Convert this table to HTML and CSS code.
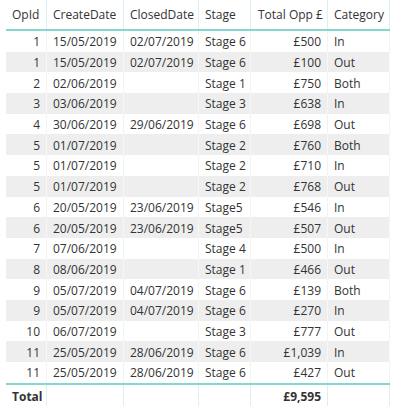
FILE: index.html
```html
<!DOCTYPE html>
<html>
<head>
<meta charset="utf-8">
<link rel="stylesheet" href="styles.css">
</head>
<body>
<div class="tbl">
  <div class="row head">
    <div class="c">OpId</div><div class="c">CreateDate</div><div class="c">ClosedDate</div><div class="c">Stage</div><div class="c">Total Opp £</div><div class="c">Category</div>
  </div>
  <div class="body">
    <div class="row"><div class="c r">1</div><div class="c">15/05/2019</div><div class="c">02/07/2019</div><div class="c">Stage 6</div><div class="c r">£500</div><div class="c">In</div></div>
    <div class="row"><div class="c r">1</div><div class="c">15/05/2019</div><div class="c">02/07/2019</div><div class="c">Stage 6</div><div class="c r">£100</div><div class="c">Out</div></div>
    <div class="row"><div class="c r">2</div><div class="c">02/06/2019</div><div class="c"></div><div class="c">Stage 1</div><div class="c r">£750</div><div class="c">Both</div></div>
    <div class="row"><div class="c r">3</div><div class="c">03/06/2019</div><div class="c"></div><div class="c">Stage 3</div><div class="c r">£638</div><div class="c">In</div></div>
    <div class="row"><div class="c r">4</div><div class="c">30/06/2019</div><div class="c">29/06/2019</div><div class="c">Stage 6</div><div class="c r">£698</div><div class="c">Out</div></div>
    <div class="row"><div class="c r">5</div><div class="c">01/07/2019</div><div class="c"></div><div class="c">Stage 2</div><div class="c r">£760</div><div class="c">Both</div></div>
    <div class="row"><div class="c r">5</div><div class="c">01/07/2019</div><div class="c"></div><div class="c">Stage 2</div><div class="c r">£710</div><div class="c">In</div></div>
    <div class="row"><div class="c r">5</div><div class="c">01/07/2019</div><div class="c"></div><div class="c">Stage 2</div><div class="c r">£768</div><div class="c">Out</div></div>
    <div class="row"><div class="c r">6</div><div class="c">20/05/2019</div><div class="c">23/06/2019</div><div class="c">Stage5</div><div class="c r">£546</div><div class="c">In</div></div>
    <div class="row"><div class="c r">6</div><div class="c">20/05/2019</div><div class="c">23/06/2019</div><div class="c">Stage5</div><div class="c r">£507</div><div class="c">Out</div></div>
    <div class="row"><div class="c r">7</div><div class="c">07/06/2019</div><div class="c"></div><div class="c">Stage 4</div><div class="c r">£500</div><div class="c">In</div></div>
    <div class="row"><div class="c r">8</div><div class="c">08/06/2019</div><div class="c"></div><div class="c">Stage 1</div><div class="c r">£466</div><div class="c">Out</div></div>
    <div class="row"><div class="c r">9</div><div class="c">05/07/2019</div><div class="c">04/07/2019</div><div class="c">Stage 6</div><div class="c r">£139</div><div class="c">Both</div></div>
    <div class="row"><div class="c r">9</div><div class="c">05/07/2019</div><div class="c">04/07/2019</div><div class="c">Stage 6</div><div class="c r">£270</div><div class="c">In</div></div>
    <div class="row"><div class="c r">10</div><div class="c">06/07/2019</div><div class="c"></div><div class="c">Stage 3</div><div class="c r">£777</div><div class="c">Out</div></div>
    <div class="row"><div class="c r">11</div><div class="c">25/05/2019</div><div class="c">28/06/2019</div><div class="c">Stage 6</div><div class="c r">£1,039</div><div class="c">In</div></div>
    <div class="row"><div class="c r">11</div><div class="c">25/05/2019</div><div class="c">28/06/2019</div><div class="c">Stage 6</div><div class="c r">£427</div><div class="c">Out</div></div>
  </div>
  <div class="row total">
    <div class="c">Total</div><div class="c"></div><div class="c"></div><div class="c"></div><div class="c r">£9,595</div><div class="c"></div>
  </div>
</div>
</body>
</html>
```
FILE: styles.css
```css
html, body {
  margin: 0;
  padding: 0;
  background: #ffffff;
}
body {
  font-family: "Open Sans", "Noto Sans", sans-serif;
  font-size: 12px;
  color: #333333;
}
.tbl {
  margin-left: 6px;
  width: 384px;
}
.row {
  display: grid;
  grid-template-columns: 41px 77px 75px 52px 77px 62px;
  height: 20.7px;
}
.c {
  display: flex;
  align-items: center;
  padding: 1px 6px 0 6px;
  border-right: 1px solid #f3f3f3;
  white-space: nowrap;
  overflow: hidden;
  box-sizing: border-box;
}
.c.r {
  justify-content: flex-end;
}
.head {
  height: 31px;
  border-bottom: 2px solid #86d6cf;
  box-sizing: border-box;
}
.head .c {
  border-right-color: #dcf1ef;
  padding-top: 0;
  padding-bottom: 1px;
}
.head .c:nth-child(5) {
  padding-left: 7px;
}
.body .row:nth-child(even) {
  background: #eeeeee;
}
.body .row:nth-child(even) .c {
  border-right-color: #f7f7f7;
}
.total {
  height: 21px;
  border-top: 2px solid #86d6cf;
  font-weight: bold;
  box-sizing: content-box;
}
.total .c {
  border-right-color: #dcf1ef;
  padding-top: 2px;
}
```
